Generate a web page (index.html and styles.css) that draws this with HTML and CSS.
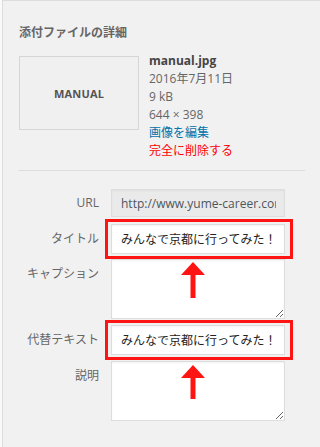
FILE: index.html
```html
<!DOCTYPE html>
<html lang="ja">
<head>
<meta charset="utf-8">
<title>添付ファイルの詳細</title>
<link rel="stylesheet" href="styles.css">
</head>
<body>
<div class="panel">
  <h2 class="heading">添付ファイルの詳細</h2>
  <div class="info">
    <div class="thumb">MANUAL</div>
    <div class="details">
      <div class="filename">manual.jpg</div>
      <div class="meta">2016年7月11日</div>
      <div class="meta">9 kB</div>
      <div class="meta">644 × 398</div>
      <a class="edit" href="#">画像を編集</a>
      <a class="delete" href="#">完全に削除する</a>
    </div>
  </div>
  <div class="divider"></div>
  <div class="settings">
    <div class="setting row-url">
      <span class="name">URL</span>
      <span class="field"><input class="text readonly" type="text" readonly value="http://www.yume-career.com/wp-content/uploads/2016/07/manual.jpg"></span>
    </div>
    <div class="setting row-title">
      <span class="name">タイトル</span>
      <span class="field framed"><input class="text" type="text" value="みんなで京都に行ってみた！">
        <svg class="arrow arrow-title" width="24" height="36" viewBox="0 0 24 36"><polygon points="12,0 24,13 0,13" fill="#ff1414"/><rect x="9.5" y="12" width="5" height="24" fill="#ff1414"/></svg>
      </span>
    </div>
    <div class="setting row-caption">
      <span class="name">キャプション</span>
      <span class="field"><textarea class="area"></textarea></span>
    </div>
    <div class="setting row-alt">
      <span class="name">代替テキスト</span>
      <span class="field framed"><input class="text" type="text" value="みんなで京都に行ってみた！">
        <svg class="arrow arrow-alt" width="24" height="34" viewBox="0 0 24 34"><polygon points="12,0 24,13 0,13" fill="#ff1414"/><rect x="9.5" y="12" width="5" height="22" fill="#ff1414"/></svg>
      </span>
    </div>
    <div class="setting row-desc">
      <span class="name">説明</span>
      <span class="field"><textarea class="area"></textarea></span>
    </div>
  </div>
</div>
</body>
</html>
```

FILE: styles.css
```css
html, body {
  margin: 0;
  padding: 0;
}
body {
  background: #fafafa;
  font-family: "Open Sans", "Noto Sans CJK JP", sans-serif;
  font-size: 12px;
  color: #666;
}
.panel {
  margin-left: 2px;
  height: 447px;
  box-sizing: border-box;
  background: #f1f1f1;
  border-top: 1px solid #dcdcdc;
  border-left: 1px solid #dcdcdc;
  padding: 24px 15px 0 16px;
}
.heading {
  margin: 0;
  font-size: 12px;
  line-height: 16px;
  font-weight: bold;
  color: #666;
}
.info {
  display: flex;
  margin-top: 11px;
}
.thumb {
  margin-top: 4px;
  width: 118px;
  height: 72px;
  border: 1px solid #d6d6d6;
  background: #f0f0f0;
  display: flex;
  align-items: center;
  justify-content: center;
  font-size: 11px;
  font-weight: bold;
  color: #555;
  letter-spacing: 0.2px;
}
.details {
  margin-left: 10px;
  display: flex;
  flex-direction: column;
  line-height: 18px;
}
.filename {
  font-weight: bold;
  color: #444;
}
.meta {
  color: #666;
}
.details a {
  text-decoration: none;
}
.edit {
  color: #0073aa;
}
.delete {
  color: #f00;
}
.divider {
  margin-top: 10px;
  border-top: 1px solid #dcdcdc;
}
.settings {
  margin-top: 18px;
  display: flex;
  flex-direction: column;
}
.setting {
  display: flex;
  align-items: flex-start;
}
.setting .name {
  width: 80px;
  margin-right: 12px;
  text-align: right;
  line-height: 16px;
  padding-top: 7px;
  color: #666;
}
.row-url .name {
  padding-top: 6px;
}
.row-title { margin-top: 7px; }
.row-caption { margin-top: 5px; }
.row-alt { margin-top: 6px; }
.row-desc { margin-top: 6px; }
.field {
  position: relative;
  display: block;
  width: 174px;
}
.text {
  display: block;
  box-sizing: border-box;
  width: 174px;
  height: 30px;
  margin: 0;
  padding: 0 8px 0 9px;
  border: 1px solid #ddd;
  background: #fff;
  box-shadow: inset 0 1px 2px rgba(0, 0, 0, 0.05);
  font-family: "Open Sans", "Noto Sans CJK JP", sans-serif;
  font-size: 12px;
  color: #222;
  outline: none;
}
.text.readonly {
  height: 28px;
  background: #eaeaea;
  color: #4d565e;
}
.area {
  display: block;
  box-sizing: border-box;
  width: 174px;
  height: 60px;
  margin: 0;
  border: 1px solid #ddd;
  background: #fff;
  box-shadow: inset 0 1px 2px rgba(0, 0, 0, 0.05);
  resize: vertical;
  outline: none;
}
.framed::after {
  content: "";
  position: absolute;
  left: -6px;
  top: -5px;
  right: -8px;
  bottom: -5px;
  border: 3px solid #ff1414;
  pointer-events: none;
}
.arrow {
  position: absolute;
  left: 70px;
  z-index: 2;
  display: block;
}
.arrow-title { top: 38px; }
.arrow-alt { top: 40px; }
```
